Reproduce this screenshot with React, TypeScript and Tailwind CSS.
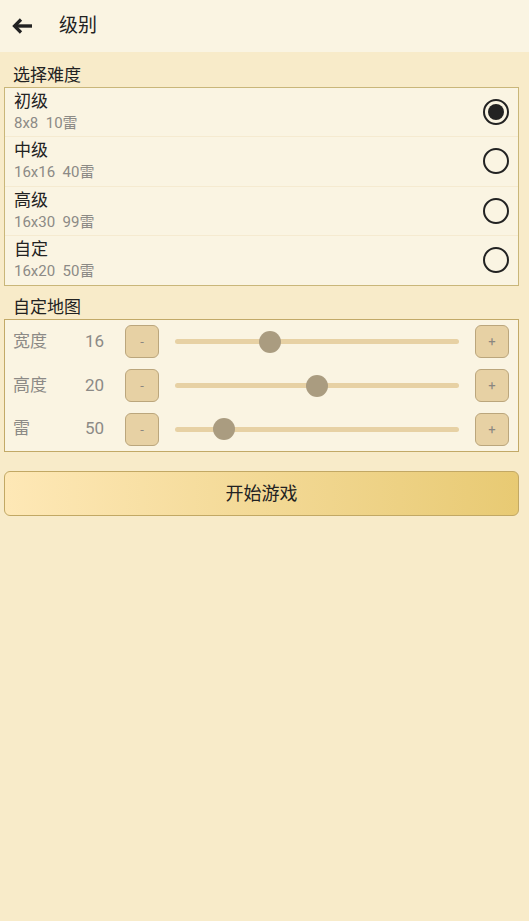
import { useState } from "react";

interface Level {
  name: string;
  desc: string;
}

const levels: Level[] = [
  { name: "初级", desc: "8x8  10雷" },
  { name: "中级", desc: "16x16  40雷" },
  { name: "高级", desc: "16x30  99雷" },
  { name: "自定", desc: "16x20  50雷" },
];

interface SliderRow {
  label: string;
  value: number;
  pct: number;
}

const rows: SliderRow[] = [
  { label: "宽度", value: 16, pct: 33.5 },
  { label: "高度", value: 20, pct: 50 },
  { label: "雷", value: 50, pct: 17.3 },
];

function Radio({ checked }: { checked: boolean }) {
  return (
    <div className="w-[26px] h-[26px] rounded-full border-[2.5px] border-[#222] flex items-center justify-center">
      {checked && <div className="w-[16px] h-[16px] rounded-full bg-[#222]" />}
    </div>
  );
}

function StepButton({ sign }: { sign: string }) {
  return (
    <button className="w-[34px] h-[33px] shrink-0 rounded-[6px] border border-[#bba67c] bg-[#e7d1a4] text-[#8a8680] text-[13px] leading-none flex items-center justify-center">
      {sign}
    </button>
  );
}

export default function App() {
  const [selected, setSelected] = useState(0);

  return (
    <div
      className="w-[529px] h-[921px] bg-[#f8ebc9] flex flex-col"
      style={{ fontFamily: 'Roboto, "Noto Sans CJK SC", "Noto Sans", sans-serif' }}
    >
      {/* header */}
      <div className="h-[52px] bg-[#faf4e2] flex items-center pl-[12px] shrink-0">
        <svg width="21" height="16" viewBox="0 0 21 16" className="text-[#222]">
          <path d="M9 1.5 L2.5 8 L9 14.5" fill="none" stroke="currentColor" strokeWidth="3.2" />
          <path d="M3 8 H20" stroke="currentColor" strokeWidth="3.4" />
        </svg>
        <span className="ml-[26px] text-[19px] text-[#222]">级别</span>
      </div>

      <div className="px-[4px] pr-[10px] flex flex-col">
        <div className="pl-[9px] pt-[12px] h-[35px] text-[17px] leading-[22px] text-[#222]">选择难度</div>
        <div className="border border-[#c9b679] bg-[#faf4e2]">
          {levels.map((lv, i) => (
            <div
              key={lv.name}
              onClick={() => setSelected(i)}
              className={`h-[49.25px] flex items-center justify-between pl-[9px] pr-[9px] ${
                i < levels.length - 1 ? "border-b border-[#f5ead0]" : ""
              }`}
            >
              <div className="flex flex-col">
                <span className="text-[17px] leading-[22px] text-[#222]">{lv.name}</span>
                <span className="text-[15px] leading-[22px] text-[#8c8a86] whitespace-pre">{lv.desc}</span>
              </div>
              <Radio checked={selected === i} />
            </div>
          ))}
        </div>

        <div className="pl-[9px] pt-[10px] h-[33px] text-[17px] leading-[22px] text-[#222]">自定地图</div>
        <div className="border border-[#c2a967] bg-[#faf4e2] flex flex-col">
          {rows.map((r) => (
            <div key={r.label} className="h-[43.7px] flex items-center pl-[8px] pr-[9px]">
              <span className="w-[72px] text-[17px] text-[#8c8a86]">{r.label}</span>
              <span className="w-[40px] text-[17px] text-[#8c8a86]">{r.value}</span>
              <StepButton sign="-" />
              <div className="flex-1 mx-[16px] relative h-[22px] flex items-center">
                <div className="w-full h-[5px] rounded-full bg-[#e7d1a4]" />
                <div
                  className="absolute w-[22px] h-[22px] rounded-full bg-[#aa9c80] -translate-x-1/2"
                  style={{ left: `${r.pct}%` }}
                />
              </div>
              <StepButton sign="+" />
            </div>
          ))}
        </div>

        <button className="mt-[19px] h-[45px] rounded-[6px] border border-[#c2a864] bg-gradient-to-r from-[#fee8b6] to-[#e8ca73] text-[18px] text-[#222]">
          开始游戏
        </button>
      </div>
    </div>
  );
}
